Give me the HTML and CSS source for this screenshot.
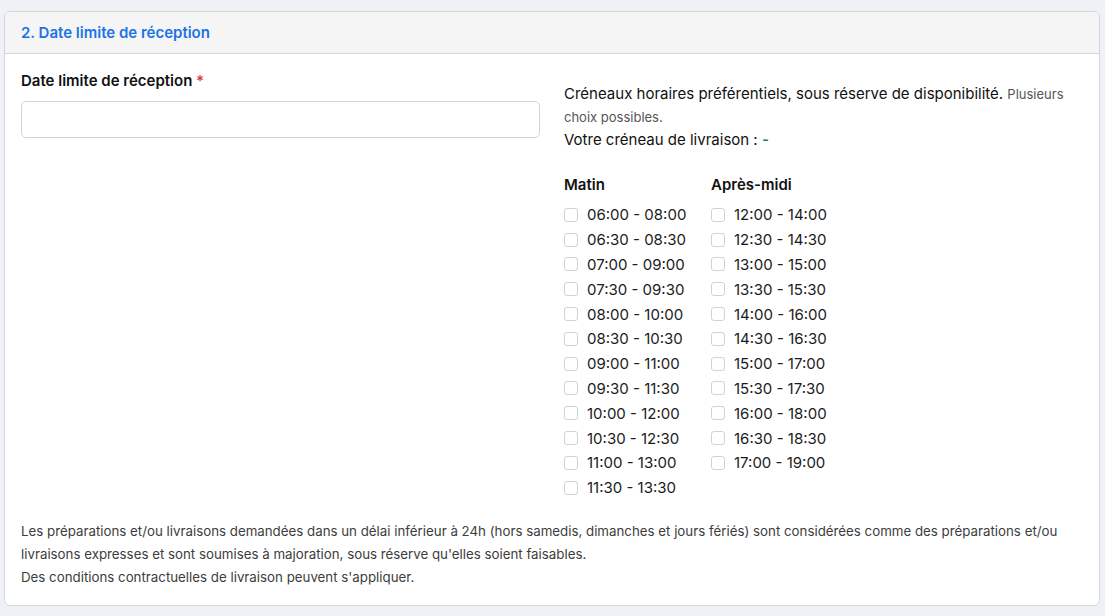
FILE: index.html
```html
<!DOCTYPE html>
<html lang="fr">
<head>
    <meta charset="UTF-8">
    <meta name="viewport" content="width=device-width, initial-scale=1.0">
    <title>Date limite de réception</title>
    <link rel="stylesheet" href="styles.css">
</head>
<body>
    <div class="card">
        <div class="card-header">2. Date limite de réception</div>
        <div class="card-body">
            <div class="row">
                <div class="col">
                    <label class="field-label" for="deadline">Date limite de réception <span class="required">*</span></label>
                    <input type="text" id="deadline" class="field-input">
                </div>
                <div class="col slots">
                    <p class="slots-intro">Créneaux horaires préférentiels, sous réserve de disponibilité. <small>Plusieurs choix possibles.</small></p>
                    <p class="slots-current">Votre créneau de livraison : <span class="slot-value">-</span></p>

                    <div class="slot-groups">
                        <div class="slot-group">
                            <h4>Matin</h4>
                            <label class="slot"><input type="checkbox"> 06:00 - 08:00</label>
                            <label class="slot"><input type="checkbox"> 06:30 - 08:30</label>
                            <label class="slot"><input type="checkbox"> 07:00 - 09:00</label>
                            <label class="slot"><input type="checkbox"> 07:30 - 09:30</label>
                            <label class="slot"><input type="checkbox"> 08:00 - 10:00</label>
                            <label class="slot"><input type="checkbox"> 08:30 - 10:30</label>
                            <label class="slot"><input type="checkbox"> 09:00 - 11:00</label>
                            <label class="slot"><input type="checkbox"> 09:30 - 11:30</label>
                            <label class="slot"><input type="checkbox"> 10:00 - 12:00</label>
                            <label class="slot"><input type="checkbox"> 10:30 - 12:30</label>
                            <label class="slot"><input type="checkbox"> 11:00 - 13:00</label>
                            <label class="slot"><input type="checkbox"> 11:30 - 13:30</label>
                        </div>
                        <div class="slot-group">
                            <h4>Après-midi</h4>
                            <label class="slot"><input type="checkbox"> 12:00 - 14:00</label>
                            <label class="slot"><input type="checkbox"> 12:30 - 14:30</label>
                            <label class="slot"><input type="checkbox"> 13:00 - 15:00</label>
                            <label class="slot"><input type="checkbox"> 13:30 - 15:30</label>
                            <label class="slot"><input type="checkbox"> 14:00 - 16:00</label>
                            <label class="slot"><input type="checkbox"> 14:30 - 16:30</label>
                            <label class="slot"><input type="checkbox"> 15:00 - 17:00</label>
                            <label class="slot"><input type="checkbox"> 15:30 - 17:30</label>
                            <label class="slot"><input type="checkbox"> 16:00 - 18:00</label>
                            <label class="slot"><input type="checkbox"> 16:30 - 18:30</label>
                            <label class="slot"><input type="checkbox"> 17:00 - 19:00</label>
                        </div>
                    </div>
                </div>
            </div>

            <p class="note">
                Les préparations et/ou livraisons demandées dans un délai inférieur à 24h (hors samedis, dimanches et jours fériés) sont considérées comme des préparations et/ou livraisons expresses et sont soumises à majoration, sous réserve qu'elles soient faisables.<br>
                Des conditions contractuelles de livraison peuvent s'appliquer.
            </p>
        </div>
    </div>
</body>
</html>
```

FILE: styles.css
```css
* {
    margin: 0;
    padding: 0;
    box-sizing: border-box;
}

body {
    font-family: Inter, "Noto Sans", sans-serif;
    background-color: #eef1f5;
    color: #111;
    padding: 11px 5px 0 4px;
}

.card {
    background-color: white;
    border: 1px solid #d4d6d9;
    border-radius: 6px;
    overflow: hidden;
}

.card-header {
    background-color: #f5f5f5;
    border-bottom: 1px solid #d4d6d9;
    color: #1a73e8;
    font-size: 15px;
    font-weight: 600;
    height: 42px;
    line-height: 40px;
    padding: 1px 16px 0;
}

.card-body {
    padding: 17px 16px 16px 16px;
}

.row {
    display: grid;
    grid-template-columns: 1fr 1fr;
    gap: 24px;
}

.field-label {
    display: block;
    font-size: 15px;
    font-weight: 600;
    line-height: 20px;
    margin-bottom: 10px;
}

.required {
    color: #dc3545;
}

.field-input {
    display: block;
    width: 100%;
    height: 37px;
    border: 1px solid #d0d3d7;
    border-radius: 5px;
    padding: 6px 12px;
    font-size: 15px;
    font-family: inherit;
}

.slots {
    padding-top: 11px;
}

.slots-intro {
    font-size: 15px;
    line-height: 23px;
}

.slots-intro small {
    font-size: 13px;
    line-height: 1;
    color: #555;
}

.slots-current {
    font-size: 15px;
    line-height: 23px;
}

.slot-value {
    color: #198754;
    font-weight: 600;
}

.slot-groups {
    display: flex;
    margin-top: 24px;
}

.slot-group {
    width: 147px;
}

.slot-group h4 {
    font-size: 15px;
    font-weight: 600;
    line-height: 20px;
    margin-bottom: 7.5px;
}

.slot {
    display: flex;
    align-items: center;
    gap: 9px;
    font-size: 15px;
    height: 24.8px;
    color: #1b1b1b;
}

.slot input {
    appearance: none;
    width: 14px;
    height: 14px;
    border: 1px solid #cfd2d6;
    border-radius: 3px;
    background-color: white;
    flex-shrink: 0;
}

.note {
    font-size: 13.3px;
    line-height: 23px;
    color: #3d3d3d;
    margin-top: 20px;
}
```
